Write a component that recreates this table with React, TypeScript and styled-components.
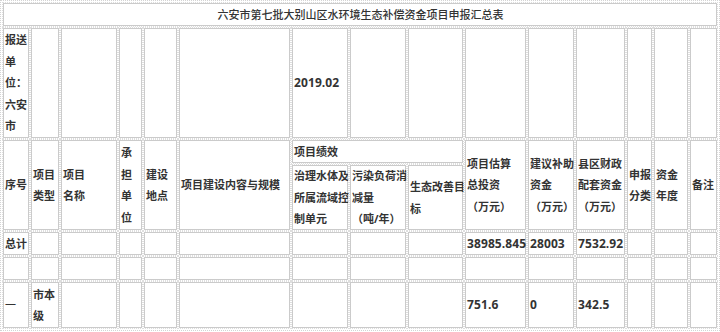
import React from "react";
import styled, { createGlobalStyle } from "styled-components";

const Global = createGlobalStyle`
  html, body { margin: 0; padding: 0; background: #fff; }
  body { font-family: "Open Sans", "Noto Sans CJK SC", sans-serif; }
`;

const Sheet = styled.div`
  box-sizing: border-box;
  width: 720px;
  border: 1px dotted #d4d4d4;
  padding: 2px;
  display: grid;
  grid-template-columns: 26px 28px 56px 23px 33px 111px 56px 56px 55px 61px 46px 49px 25px 34px 27px;
  grid-template-rows: 23px 110px 23px 65px 23px 23px 46px;
  gap: 2px;
  color: #333;
  font-size: 11px;
  line-height: 21.5px;
`;

const Cell = styled.div<{ $c: string; $r: string; $center?: boolean; $weight?: number }>`
  grid-column: ${(p) => p.$c};
  grid-row: ${(p) => p.$r};
  box-sizing: border-box;
  border: 1px solid #cbcbcb;
  outline: 1px dotted #dedede;
  display: flex;
  flex-direction: column;
  justify-content: center;
  align-items: ${(p) => (p.$center ? "center" : "flex-start")};
  padding: 0 0 0 1px;
  font-weight: ${(p) => p.$weight ?? 700};
  white-space: nowrap;
  overflow: visible;
  min-width: 0;
`;

const Line = styled.span`
  display: block;
`;

const Num = styled.span`
  font-family: "Open Sans", sans-serif;
  font-size: 12px;
  font-weight: 700;
  letter-spacing: 0.1px;
`;

type C = { c: number | string; r: number | string; lines?: string[]; num?: string; center?: boolean; weight?: number };

const cells: C[] = [
  { c: "1 / -1", r: 1, lines: ["六安市第七批大别山区水环境生态补偿资金项目申报汇总表"], center: true, weight: 500 },
  // row 2
  { c: 1, r: 2, lines: ["报送", "单", "位：", "六安", "市"] },
  { c: 2, r: 2 }, { c: 3, r: 2 }, { c: 4, r: 2 }, { c: 5, r: 2 }, { c: 6, r: 2 },
  { c: 7, r: 2, num: "2019.02" },
  { c: 8, r: 2 }, { c: 9, r: 2 }, { c: 10, r: 2 }, { c: 11, r: 2 }, { c: 12, r: 2 },
  { c: 13, r: 2 }, { c: 14, r: 2 }, { c: 15, r: 2 },
  // header
  { c: 1, r: "3 / span 2", lines: ["序号"] },
  { c: 2, r: "3 / span 2", lines: ["项目", "类型"] },
  { c: 3, r: "3 / span 2", lines: ["项目", "名称"] },
  { c: 4, r: "3 / span 2", lines: ["承", "担", "单", "位"] },
  { c: 5, r: "3 / span 2", lines: ["建设", "地点"] },
  { c: 6, r: "3 / span 2", lines: ["项目建设内容与规模"] },
  { c: "7 / span 3", r: 3, lines: ["项目绩效"] },
  { c: 7, r: 4, lines: ["治理水体及", "所属流域控", "制单元"] },
  { c: 8, r: 4, lines: ["污染负荷消", "减量", "（吨/年）"] },
  { c: 9, r: 4, lines: ["生态改善目", "标"] },
  { c: 10, r: "3 / span 2", lines: ["项目估算", "总投资", "（万元）"] },
  { c: 11, r: "3 / span 2", lines: ["建议补助", "资金", "（万元）"] },
  { c: 12, r: "3 / span 2", lines: ["县区财政", "配套资金", "（万元）"] },
  { c: 13, r: "3 / span 2", lines: ["申报", "分类"] },
  { c: 14, r: "3 / span 2", lines: ["资金", "年度"] },
  { c: 15, r: "3 / span 2", lines: ["备注"] },
  // total
  { c: 1, r: 5, lines: ["总计"] },
  ...[2, 3, 4, 5, 6, 7, 8, 9].map((c) => ({ c, r: 5 })),
  { c: 10, r: 5, num: "38985.845" },
  { c: 11, r: 5, num: "28003" },
  { c: 12, r: 5, num: "7532.92" },
  { c: 13, r: 5 }, { c: 14, r: 5 }, { c: 15, r: 5 },
  // empty
  ...Array.from({ length: 15 }, (_, i) => ({ c: i + 1, r: 6 })),
  // 一
  { c: 1, r: 7, lines: ["一"], weight: 400 },
  { c: 2, r: 7, lines: ["市本", "级"] },
  ...[3, 4, 5, 6, 7, 8, 9].map((c) => ({ c, r: 7 })),
  { c: 10, r: 7, num: "751.6" },
  { c: 11, r: 7, num: "0" },
  { c: 12, r: 7, num: "342.5" },
  { c: 13, r: 7 }, { c: 14, r: 7 }, { c: 15, r: 7 },
];

export default function App() {
  return (
    <>
      <Global />
      <Sheet>
        {cells.map((cell, i) => (
          <Cell key={i} $c={String(cell.c)} $r={String(cell.r)} $center={cell.center} $weight={cell.weight}>
            {cell.lines?.map((l, j) => (
              <Line key={j}>{l}</Line>
            ))}
            {cell.num && <Num>{cell.num}</Num>}
          </Cell>
        ))}
      </Sheet>
    </>
  );
}
